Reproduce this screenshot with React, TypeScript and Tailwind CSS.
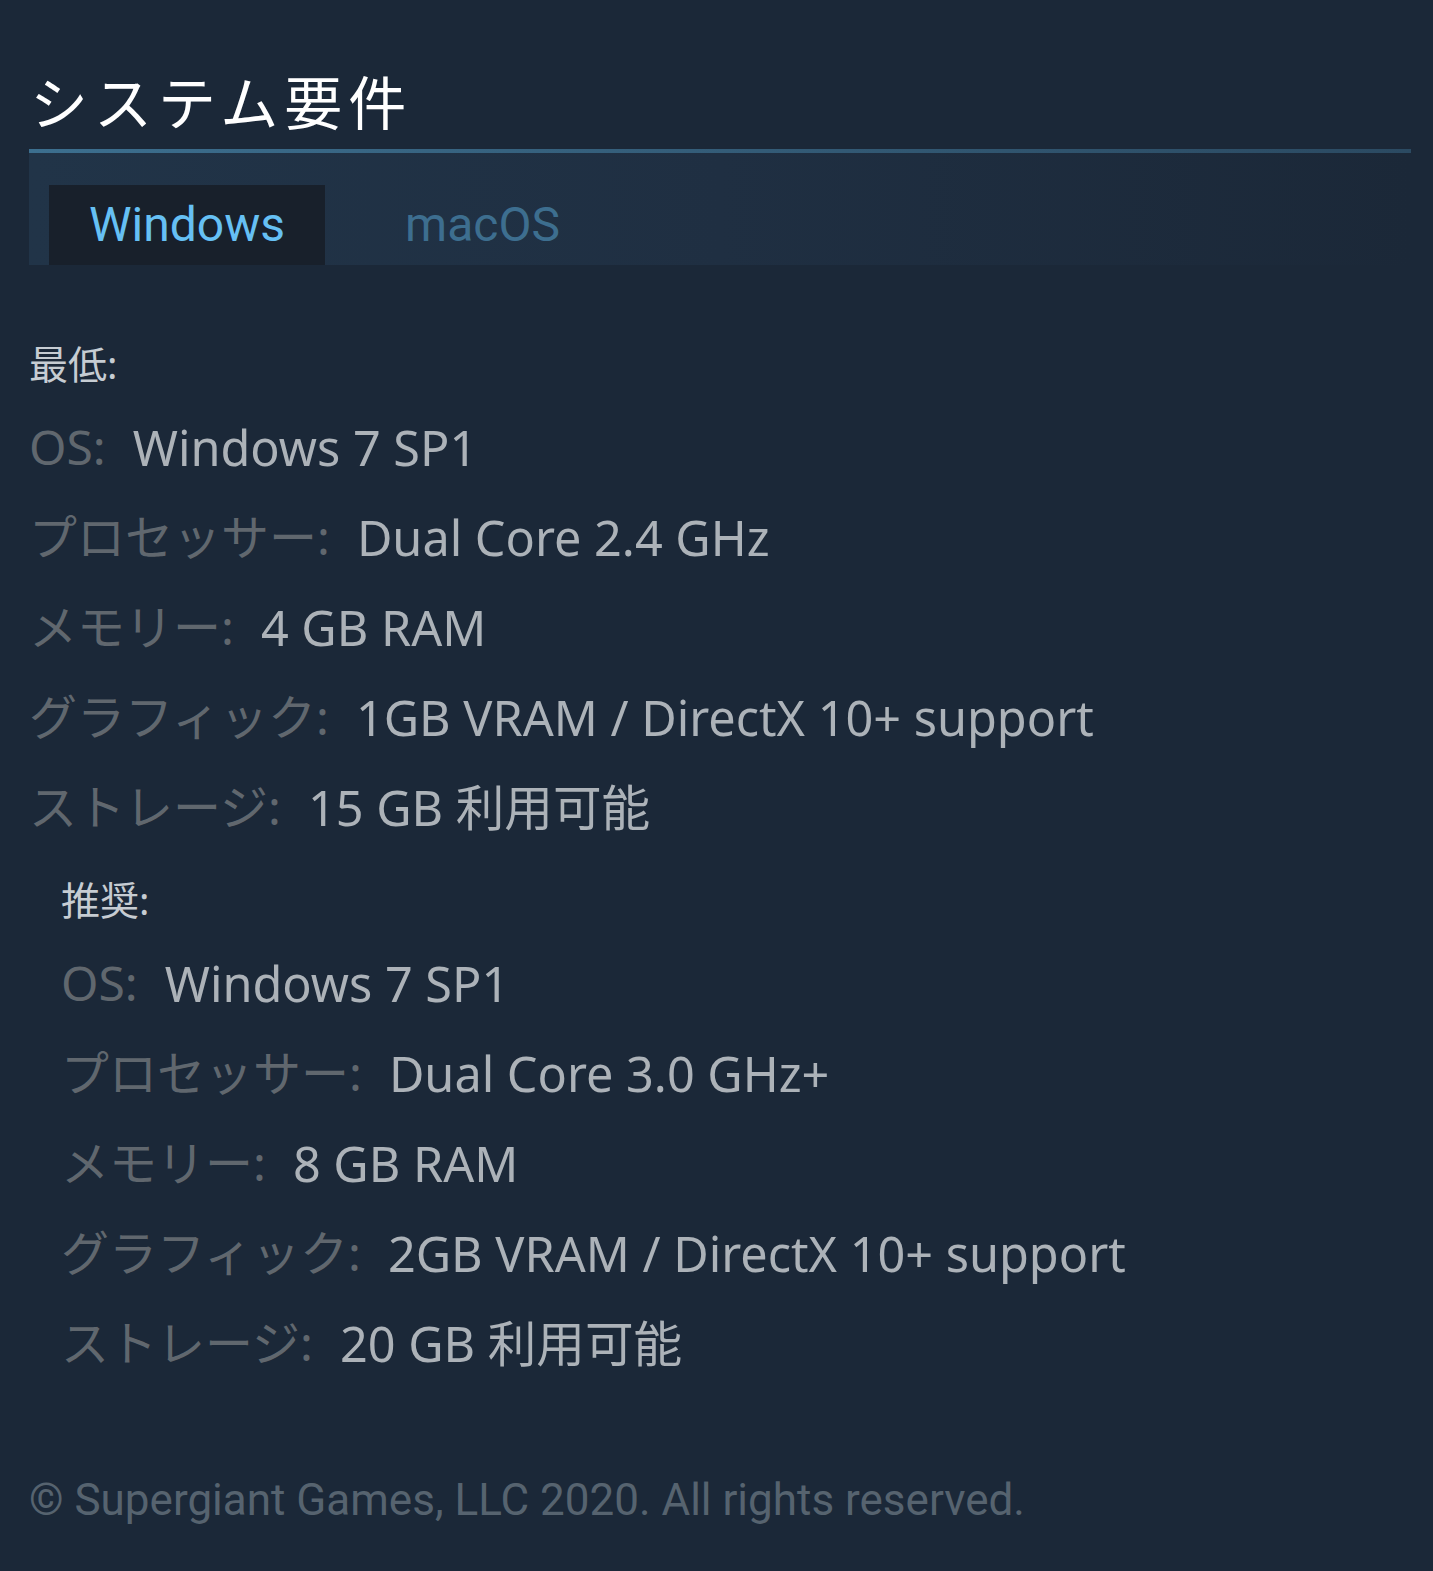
import React from "react";

const cjk = { fontFamily: '"Noto Sans CJK JP", "Noto Sans", sans-serif' };
const body = { fontFamily: '"Noto Sans", "Noto Sans CJK JP", sans-serif' };
const roboto = { fontFamily: 'Roboto, "Noto Sans CJK JP", sans-serif' };

type Row = [string, string];

const minRows: Row[] = [
  ["OS:", "Windows 7 SP1"],
  ["プロセッサー:", "Dual Core 2.4 GHz"],
  ["メモリー:", "4 GB RAM"],
  ["グラフィック:", "1GB VRAM / DirectX 10+ support"],
  ["ストレージ:", "15 GB 利用可能"],
];

const recRows: Row[] = [
  ["OS:", "Windows 7 SP1"],
  ["プロセッサー:", "Dual Core 3.0 GHz+"],
  ["メモリー:", "8 GB RAM"],
  ["グラフィック:", "2GB VRAM / DirectX 10+ support"],
  ["ストレージ:", "20 GB 利用可能"],
];

function Rows({ rows }: { rows: Row[] }) {
  return (
    <ul className="flex flex-col" style={body}>
      {rows.map(([k, v], i) => (
        <li key={i} className="h-[90px] flex items-center text-[48px] whitespace-nowrap">
          <span className="text-[#60676e]">{k}</span>
          <span className="ml-[27px] text-[#acb2b8] text-[48.6px]">{v}</span>
        </li>
      ))}
    </ul>
  );
}

export default function App() {
  return (
    <div className="min-h-[1571px] w-full bg-[#1b2838] pl-[29px] pr-[22px] pt-[61px]" style={cjk}>
      <h2 className="text-[58px] leading-[78px] text-white tracking-[6px] pl-[1px]">システム要件</h2>
      <div className="mt-[10px] h-[4px] bg-gradient-to-r from-[#3c6f8f] to-[#2b4a62]" />
      <div className="h-[112px] flex items-end pl-[20px] bg-gradient-to-r from-[#213448] via-[#1f2f42] to-[#1b2838]">
        <div className="h-[80px] w-[276px] bg-[#18202b] flex items-center justify-center text-[48px] text-[#66c0f4]" style={roboto}>
          Windows
        </div>
        <div className="h-[80px] w-[315px] flex items-center justify-center text-[48px] text-[#3d6e8f]" style={roboto}>
          macOS
        </div>
      </div>

      <div className="mt-[69px]">
        <div className="h-[60px] flex items-center text-[39px] text-[#c6ccd2] mb-[8px]" style={body}>最低:</div>
        <Rows rows={minRows} />
      </div>

      <div className="pl-[32px] mt-[18px]">
        <div className="h-[60px] flex items-center text-[39px] text-[#c6ccd2] mb-[8px]" style={body}>推奨:</div>
        <Rows rows={recRows} />
      </div>

      <div className="mt-[82px] text-[44px] text-[#56636f] leading-[60px]" style={roboto}>
        © Supergiant Games, LLC 2020. All rights reserved.
      </div>
    </div>
  );
}
